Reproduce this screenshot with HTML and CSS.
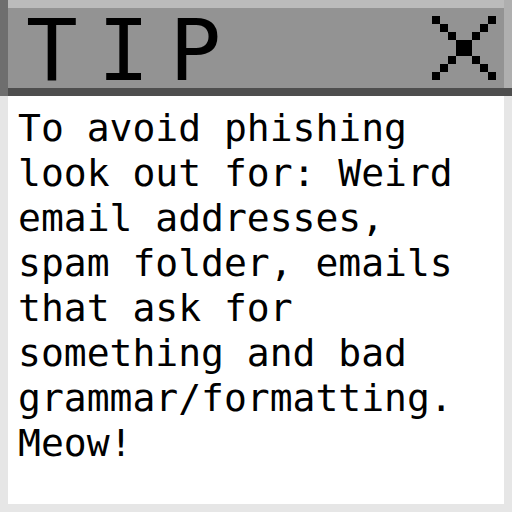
FILE: index.html
```html
<!DOCTYPE html>
<html>
<head>
<meta charset="utf-8">
<link rel="stylesheet" href="styles.css">
</head>
<body>
<div class="window">
  <div class="titlebar">
    <span class="title">TIP</span>
    <svg class="close" width="64" height="64" viewBox="0 0 8 8" shape-rendering="crispEdges">
      <g fill="#000">
        <rect x="0" y="0" width="1" height="1"/>
        <rect x="7" y="0" width="1" height="1"/>
        <rect x="1" y="1" width="1" height="1"/>
        <rect x="6" y="1" width="1" height="1"/>
        <rect x="2" y="2" width="1" height="1"/>
        <rect x="5" y="2" width="1" height="1"/>
        <rect x="3" y="3" width="2" height="2"/>
        <rect x="2" y="5" width="1" height="1"/>
        <rect x="5" y="5" width="1" height="1"/>
        <rect x="1" y="6" width="1" height="1"/>
        <rect x="6" y="6" width="1" height="1"/>
        <rect x="0" y="7" width="1" height="1"/>
        <rect x="7" y="7" width="1" height="1"/>
      </g>
    </svg>
  </div>
  <div class="content">
    <p class="message">To avoid phishing look out for: Weird email addresses, spam folder, emails that ask for something and bad grammar/formatting. Meow!</p>
  </div>
</div>
</body>
</html>
```
FILE: styles.css
```css
html, body {
  margin: 0;
  padding: 0;
  background: #e6e6e6;
}
.window {
  width: 512px;
  height: 512px;
  display: flex;
  flex-direction: column;
}
.titlebar {
  height: 96px;
  flex: none;
  box-sizing: border-box;
  display: flex;
  justify-content: space-between;
  align-items: flex-start;
  padding: 0 16px 0 26px;
  background: #939393;
  box-shadow:
    inset 8px 0 0 #6e6e6e,
    inset 0 -8px 0 #4e4e4e,
    inset -8px 0 0 #afafaf,
    inset 0 8px 0 #bbbbbb;
}
.title {
  font-family: "DejaVu Sans Mono", monospace;
  font-size: 86px;
  line-height: 74px;
  margin-top: 13px;
  letter-spacing: 20px;
  color: #000;
}
.close {
  margin-top: 16px;
  display: block;
}
.content {
  flex: 1;
  margin: 0 8px 8px;
  background: #fff;
  padding: 10px;
  box-sizing: border-box;
}
.message {
  margin: 0;
  font-family: "DejaVu Sans Mono", monospace;
  font-size: 38px;
  line-height: 45px;
  color: #000;
}
```
